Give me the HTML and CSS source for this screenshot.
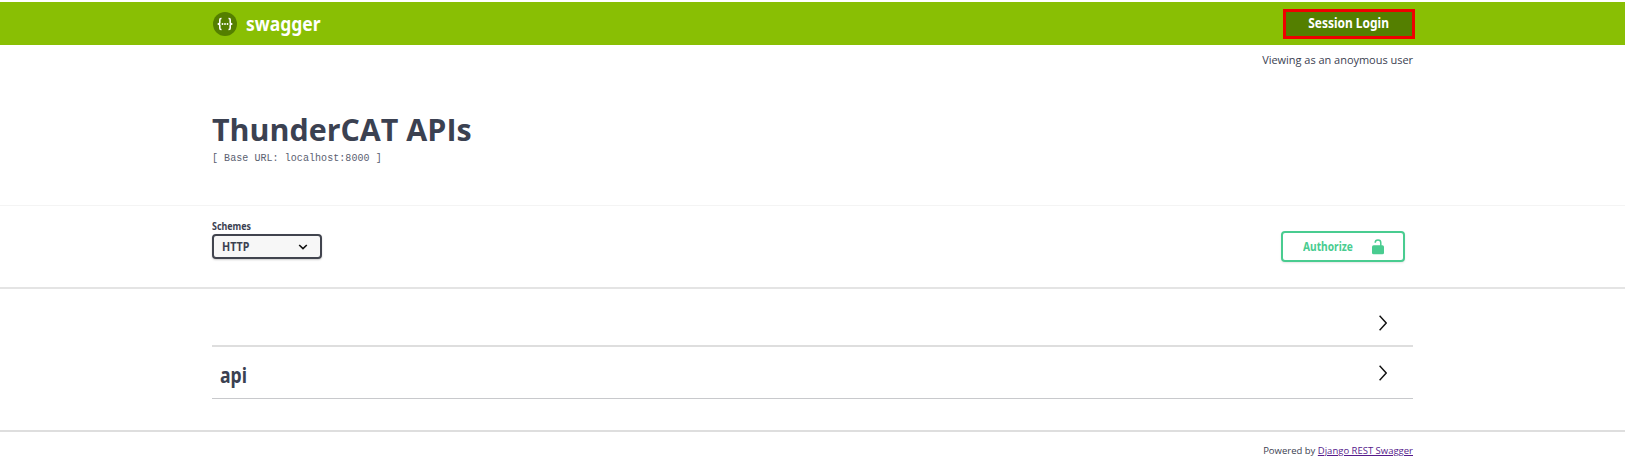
FILE: index.html
```html
<!DOCTYPE html>
<html lang="en">
<head>
<meta charset="utf-8">
<title>ThunderCAT APIs</title>
<link rel="stylesheet" href="styles.css">
</head>
<body>
<header class="topbar">
  <div class="wrap topbar-row">
    <div class="brand">
      <svg class="logo" viewBox="0 0 24 24"><circle cx="12" cy="12" r="12" fill="#547f00"/><g fill="none" stroke="#fff" stroke-width="1.6"><path d="M8.5 6.5H8Q6.8 6.5 6.8 8V10.4Q6.8 12 4.6 12Q6.8 12 6.8 13.6V16Q6.8 17.5 8 17.5H8.5"/><path d="M15.5 6.5H16Q17.2 6.5 17.2 8V10.4Q17.2 12 19.4 12Q17.2 12 17.2 13.6V16Q17.2 17.5 16 17.5H15.5"/></g><g fill="#fff"><circle cx="9.5" cy="12" r=".95"/><circle cx="12" cy="12" r=".95"/><circle cx="14.5" cy="12" r=".95"/></g></svg>
      <span class="brand-name">swagger</span>
    </div>
    <a class="login"><span class="login-text">Session Login</span></a>
  </div>
</header>
<section class="info">
  <div class="wrap">
    <p class="viewer">Viewing as an anoymous user</p>
    <h1 class="title">ThunderCAT APIs</h1>
    <pre class="base-url">[ Base URL: localhost:8000 ]</pre>
  </div>
</section>
<section class="schemes">
  <div class="wrap schemes-row">
    <div class="scheme-field">
      <span class="scheme-label">Schemes</span>
      <div class="select"><span class="select-value">HTTP</span><svg class="caret" viewBox="0 0 10 6"><path d="M1.2 1L5 4.6L8.8 1" fill="none" stroke="#111" stroke-width="1.6"/></svg></div>
    </div>
    <button class="authorize"><span class="authorize-text">Authorize</span><svg class="lock" viewBox="0 0 12 16"><rect x="0" y="6.3" width="12" height="9" rx="1.6" fill="#49cc90"/><path d="M3.2 3.8C3.2 .2 8.8 .2 8.8 3.8V7" fill="none" stroke="#49cc90" stroke-width="1.5"/></svg></button>
  </div>
</section>
<main class="wrap tags">
  <div class="tag first"><svg class="chevron" viewBox="0 0 8 16"><path d="M.6 .8L7.2 8L.6 15.2" fill="none" stroke="#111" stroke-width="1.4"/></svg></div>
  <div class="tag second"><span class="tag-name">api</span><svg class="chevron" viewBox="0 0 8 16"><path d="M.6 .8L7.2 8L.6 15.2" fill="none" stroke="#111" stroke-width="1.4"/></svg></div>
</main>
<footer class="footer">
  <div class="wrap powered"><span>Powered by <a class="link">Django REST Swagger</a></span></div>
</footer>
</body>
</html>
```
FILE: styles.css
```css
* { box-sizing: border-box; }
body { margin: 0; padding-top: 2px; background: #fff; color: #3b4151; font-family: "Open Sans", sans-serif; height: 473px; overflow: hidden; }
.wrap { width: 1201px; margin-left: 212px; }
.topbar { height: 43px; width: 1625px; background: #89bf04; }
.topbar-row { display: flex; justify-content: space-between; width: 1203px; padding-top: 7px; }
.brand { display: flex; align-items: center; height: 30px; gap: 9px; padding-left: 1px; }
.logo { width: 24px; height: 24px; }
.brand-name { color: #fff; font: bold 20px/28px "Noto Sans", sans-serif; transform: scaleX(.875); transform-origin: left; }
.login { display: flex; justify-content: center; width: 132px; height: 30px; background: #547f00; border: 3px solid #f00000; }
.login-text { color: #fff; font: bold 13.5px/23px "Noto Sans", sans-serif; transform: scaleX(.885); }
.info { width: 1625px; height: 161px; border-bottom: 1px solid #f4f4f4; }
.viewer { margin: 0; padding-top: 6px; text-align: right; font-size: 11px; line-height: 18px; letter-spacing: -.03px; }
.title { margin: 39px 0 0; font-size: 30.4px; line-height: 44px; font-weight: 700; }
.base-url { margin: 0; font: 10px/14px "Liberation Mono", monospace; letter-spacing: .06px; color: #5a6070; }
.schemes { width: 1625px; height: 83px; border-bottom: 2px solid #e4e4e4; }
.schemes-row { display: flex; justify-content: space-between; }
.scheme-field { padding-top: 13px; }
.scheme-label { display: block; font: bold 10px/14px "Noto Sans", sans-serif; height: 15px; transform: scaleX(.89); transform-origin: left; }
.select { display: flex; align-items: center; justify-content: space-between; width: 110px; height: 25px; padding: 0 12px 0 8px; border: 2px solid #41444e; border-radius: 4px; background: #f7f7f7; box-shadow: 0 1px 2px rgba(0,0,0,.2); }
.select-value { font: bold 12px/20px "Noto Sans", sans-serif; transform: scaleX(.89); transform-origin: left; }
.caret { width: 10px; height: 6px; }
.authorize { display: flex; align-items: center; justify-content: space-between; width: 124px; height: 31px; margin: 25px 8px 0 0; padding: 0 19px 0 20px; border: 2px solid #49cc90; border-radius: 4px; background: #fff; box-shadow: 0 1px 2px rgba(0,0,0,.1); }
.authorize-text { color: #49cc90; font: bold 12px/18px "Noto Sans", sans-serif; transform: scaleX(.85); transform-origin: left; }
.lock { width: 12px; height: 16px; }
.tags { height: 141px; }
.tag { display: flex; align-items: center; padding: 0 26px 0 8px; }
.first { height: 58px; border-bottom: 2px solid #dedede; padding-top: 12px; }
.second { height: 52px; border-bottom: 1px solid #c8c9cc; padding-top: 1px; }
.tag-name { font: bold 20.5px/30px "Noto Sans", sans-serif; transform: scaleX(.86); transform-origin: left; padding-top: 3px; }
.chevron { width: 8px; height: 16px; margin-left: auto; }
.footer { width: 1625px; border-top: 2px solid #dedede; }
.powered { padding-top: 11px; text-align: right; font-size: 9.5px; line-height: 16px; }
.link { color: #551a8b; text-decoration: underline; }
```
